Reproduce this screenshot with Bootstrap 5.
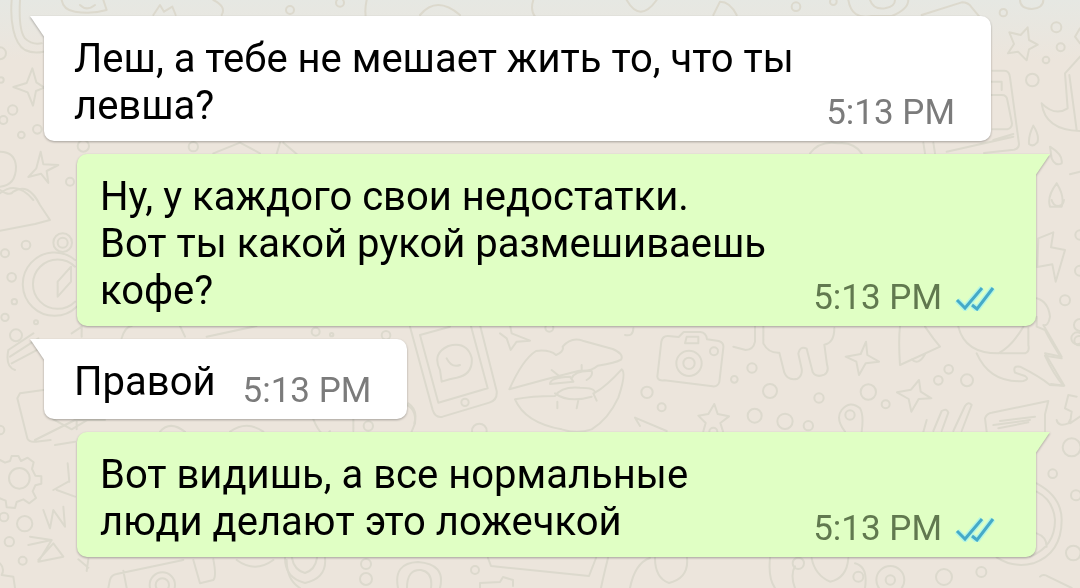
<!DOCTYPE html>
<html lang="ru">
<head>
<meta charset="utf-8">
<meta name="viewport" content="width=device-width, initial-scale=1">
<title>Чат</title>
<link href="https://cdn.jsdelivr.net/npm/bootstrap@5.3.0/dist/css/bootstrap.min.css" rel="stylesheet">
<style>
  body { background: #ece5dc; font-family: Roboto, "Noto Sans", sans-serif; color: #000; }
  .chat { min-height: 100vh; background: linear-gradient(#e6e8e3, #ece5dc 60px); isolation: isolate; }
  .wallpaper { position: absolute; inset: 0; width: 100%; height: 100%; z-index: -1; }
  .wallpaper path, .wallpaper circle { fill: none; stroke: #dcd9cd; stroke-width: 2px; stroke-linejoin: round; stroke-linecap: round; vector-effect: non-scaling-stroke; }
  .thread { padding: 16px 44px 30px; gap: 13px; }
  .bubble { position: relative; min-height: 80px; padding: 19px 36px 8px 30px; gap: 27px; border-radius: 10px; filter: drop-shadow(0 1px 1px rgba(0, 0, 0, .3)); }
  .bubble::before { content: ""; position: absolute; top: 0; width: 15px; height: 22px; background: inherit; }
  .incoming { background: #fff; border-top-left-radius: 0; margin-right: 45px; }
  .incoming::before { left: -14px; clip-path: polygon(0 0, 100% 0, 100% 100%); }
  .outgoing { background: #e0ffc4; border-top-right-radius: 0; margin-left: 33px; padding-left: 23px; padding-right: 41px; }
  .outgoing::before { right: -14px; clip-path: polygon(0 0, 100% 0, 0 100%); }
  .message-text { font-size: 40px; line-height: 47px; padding-bottom: 4px; }
  .stamp { font-size: 35px; line-height: 41px; color: #7b7b7b; white-space: nowrap; gap: 13px; }
  .outgoing .stamp { color: #61794f; }
  .checks { width: 40px; height: 26px; fill: none; stroke-width: 3; }
</style>
</head>
<body>
<main class="chat position-relative overflow-hidden">
  <svg class="wallpaper" viewBox="0 0 1080 588" preserveAspectRatio="xMidYMid slice" aria-hidden="true">
    <!-- top left -->
    <g transform="scale(.333333)">
      <path d="M35 0C30 60 40 130 75 150q25 12 55 5M60 0q-5 90 15 115 20 20 50 15M97 205l12 42 24 16-25 10-9 44-16-40-43-16 40-12zM185 0q5 30 40 35 50 8 95-5l-10-30M240 15q20 20 45 0M460 45l20-30 12 20 25-15 10 25M640 0q40 20 25 45M122 455l8 38 45 2-35 18 5 36-22-28-38 10 24-26zM0 455q45 0 48 45 0 55-48 60M0 580q50-40 100 20"/>
      <circle cx="38" cy="330" r="14"/><circle cx="64" cy="405" r="10"/><circle cx="112" cy="388" r="13"/><circle cx="3" cy="240" r="8"/><circle cx="0" cy="160" r="18"/><circle cx="10" cy="360" r="12"/><circle cx="250" cy="438" r="17"/><circle cx="210" cy="545" r="12"/><circle cx="870" cy="30" r="12"/><circle cx="1020" cy="8" r="12"/><circle cx="580" cy="440" r="14"/>
      <path d="M640 460l80-32 60 32M840 428l-10 34M850 428l40 34M1100 0q-20 90 60 130M1260 45q50-60 120 0M1600 0q-20 60 60 80M1880 0q40 70 90 0M2140 45l20-40q30 0 50 40"/>
    </g>
    <!-- top right -->
    <g transform="translate(780) scale(.333333)">
      <path d="M205 0q10 60 70 48h60q50-20 50-48M270 0q10 30 45 25 30-5 30-25M425 45l120-38q20 0 30 15l25 30M720 0q0 25 35 27 35-3 35-27M743 82l4 38 26 14-26 14-7 33-26-26-30 5 18-28-14-35 34 8zM638 212h35q15 0 17 20l27 200q0 14-15 17l-90 10M635 245h30v25M635 285h30q15 0 17 15l14 70q0 15-14 18h-44M640 420l60-18M500 455l200-45M760 377q-15 30-13 55 12 10 25-5 7-20-12-50zM785 310q40 40 78 15l-8-105 45-50M785 310q10 80 115 83M868 225l22 165M900 85l-15 25 15 20M810 440q40 25 35 50-20 10-30-15zM870 523l30-8M830 550q-30 40-20 70h35q10-30-15-70M90 460q30-40 85-30 45-5 70 30M430 428l5 32M460 428l5 32"/>
      <circle cx="48" cy="20" r="13"/><circle cx="160" cy="5" r="10"/><circle cx="670" cy="38" r="11"/><circle cx="829" cy="82" r="15"/><circle cx="842" cy="142" r="12"/><circle cx="798" cy="180" r="10"/><circle cx="757" cy="240" r="19"/>
    </g>
    <!-- left margin: torn cloud, compass, fork -->
    <g transform="translate(0 150) scale(.333333)">
      <path d="M0 120q30 20 40 5 45-30 80 40l30 45-45 12-105 20M225 330a95 95 0 1 0 5 140M225 350a74 74 0 1 0 0 105M213 350l-40 45 0 45 40-45zM25 600l75-50M30 620l85-55M35 640l95-50M25 600q-10 50 20 60M215 550q30-20 30-20v30M365 565q10-35 30-37M540 528l15 32M620 560l150-32"/>
      <circle cx="188" cy="278" r="28"/><circle cx="188" cy="278" r="15"/><circle cx="78" cy="285" r="13"/><circle cx="15" cy="310" r="12"/><circle cx="35" cy="382" r="13"/><circle cx="43" cy="455" r="8"/><circle cx="15" cy="502" r="11"/><circle cx="48" cy="556" r="18"/><circle cx="108" cy="517" r="6"/>
    </g>
    <!-- right margin: bolt, bell, unicorn -->
    <g transform="translate(780 200) scale(.333333)">
      <path d="M775 115l45-18-7 45 42 8-28 95-10-52-45 8zM815 0q5 18 20 18 15-2 17-18"/>
      <circle cx="855" cy="301" r="15"/><circle cx="900" cy="105" r="14"/><circle cx="900" cy="212" r="15"/><circle cx="900" cy="375" r="18"/><circle cx="897" cy="422" r="14"/>
      <path d="M770 295q35 10 40 55-5 30-20 25l55 95-50-10 58 97-40-5"/>
    </g>
    <!-- phone, lips, camera -->
    <g transform="translate(400 320) scale(.333333)">
      <path d="M30 20l68 250q8 25 30 20l140-42q25-8 22-35L240 15M60 45l55 203 148-43L212 15M60 45l90-25M125 185l-5-35q-25-50 25-72 55-15 70 35 5 50-45 60-20 3-45 12zM140 115q15 30 40 20M330 15l5 25 55 22-40 3-18 25-12-35-20-15M328 208q40-90 80-115 40-5 60 12 25-10 20-25 25-30 60-18l90 25q35 15 25 32-15 10-70 18-20 18-55 15-120 30-210 56zM450 192q0-20 60-22l10 15zM515 175q10-25 60-22 5 15-15 27M455 150l25 20M545 135v18M345 238q50-10 120-10 20-30 75-25 45 0 45 15 35-20 80-70 15 10-10 85-30 65-80 95-45 15-90 0-110-20-140-90zM465 220q40 30 110 10M472 245v20M535 240l-5 25M580 220l10 22M772 170l12-105q4-18 20-17l32 3 15-15h50q18 2 20 22l35 5q16 5 14 20l-12 103q-5 15-20 13l-145-18q-20 2-21-11zM860 50h35v20h-40zM705 293l15 25M705 293l95 40M943 252l10 30 34 7-26 20 8 25M943 252l-18 30-30 5 22 22-7 25M0 250q50 5 45 60l-10 25M675 45q25 5 25-20"/>
      <circle cx="867" cy="130" r="38"/><circle cx="867" cy="130" r="17"/><circle cx="942" cy="94" r="12"/><circle cx="195" cy="247" r="11"/><circle cx="741" cy="217" r="17"/><circle cx="785" cy="262" r="12"/><circle cx="1003" cy="178" r="10"/><circle cx="238" cy="333" r="22"/><circle cx="940" cy="335" r="12"/><circle cx="448" cy="23" r="12"/>
    </g>
    <g transform="translate(740 320) scale(.333333)">
      <path d="M45 20v45q-5 25-28 25l-37-10M70 20v50q15 30 48 28l15 60q10 25 40 18 15-10 12-30l-10-45q5-25 25-15l18 70q10 18 35 8 15-10 8-30l-8-60q30-5 30-50M378 65l4 40 35 20-40 5-20 35-8-40-32-15 45-8zM480 20q-5 40 0 115l120-55-20-25-25-35M515 118q20 20 40-15M655 20q20 80 120 80 40-20 75-80M710 100q40 90 140 83 20-5 5-15l-30-10q-8-22 15-18 60 30 90 55l40 2q-30-35-55-90l50 8q-30-45-50-85l-25-10v-30M780 100h75q15-5 10-25v-50M537 180l5 35 32 20-38 2-22 38-8-38-35-20 42-8zM315 335q-30-40-10-65 25-30 55-5 12 20 5 70M580 333l25-60q15-10 20 5l-20 55M640 333l35-75q10-15 20-3l-30 78M740 335l-5-40q5-15 20-17l170-35-10 40v50M780 303l105-13M775 325l90-18M985 225l25 5M985 225l-10 40 20 10-5 35 30-20"/>
      <circle cx="36" cy="144" r="14"/><circle cx="90" cy="213" r="21"/><circle cx="237" cy="234" r="14"/><circle cx="385" cy="216" r="23"/><circle cx="437" cy="253" r="12"/><circle cx="44" cy="287" r="21"/><circle cx="135" cy="304" r="23"/><circle cx="205" cy="317" r="14"/><circle cx="330" cy="285" r="14"/><circle cx="626" cy="148" r="13"/><circle cx="595" cy="181" r="13"/><circle cx="681" cy="181" r="18"/><circle cx="1012" cy="55" r="18"/>
    </g>
    <!-- around the short message -->
    <g transform="translate(0 320) scale(.333333)">
      <path d="M130 210l-70 10-8 15 30 120q5 12 25 10l45-5M105 360l120-60 90 0M160 298l55 30 50-30M165 375l60-10M230 298v30M480 335q30-35 75 0M690 335q50-35 100 0M940 298q30 70 50 35M1060 298v35M1225 250q30 20 18 60"/>
      <circle cx="0" cy="330" r="13"/><circle cx="1105" cy="318" r="14"/><circle cx="947" cy="35" r="12"/><circle cx="995" cy="44" r="5"/><circle cx="1158" cy="46" r="13"/>
    </g>
    <!-- bottom left: gear, stars, radio -->
    <g transform="translate(0 420) scale(.333333)">
      <path d="M35 108l20 0 8 15 20-10 18 14-5 20 10 20 18 2 0 22-18 5-8 18 10 20-20 16-18-12-20 8-5 18-25-2-3-20-20-8-20 8M0 120l15 8 15-5 5-15M203 130l5 55M160 210l45-25M170 210l55 20M130 270l20 55 10-55 35 50-5-60M85 375l70-15-40 65 75-15-30-40-45 50M90 350l65 10M235 418l30 25M265 418l-5 35M0 430q15 15 5 35l35 5 5 34M325 504l5-25q5-15 20-17l200-42M370 452l10 52M580 420l20 70 40-10q10-10 0-62M710 420q55 40 110 0M860 420q0 60 40 84"/>
      <circle cx="58" cy="175" r="31"/><circle cx="74" cy="311" r="23"/><circle cx="12" cy="291" r="13"/><circle cx="28" cy="365" r="14"/><circle cx="68" cy="422" r="12"/><circle cx="487" cy="495" r="38"/><circle cx="487" cy="495" r="20"/>
    </g>
    <!-- bottom strip -->
    <g transform="translate(0 555)">
      <path d="M285 3q0 20 20 25 22-5 20-25M292 3q2 12 13 15 10-3 12-15M398 33q-5-25 20-26 28 2 22 26M407 33q0-19 14-18 12 2 10 18M488 3l3 8 98 10 7-18M608 3q-5 20-7 30M630 33q5-25 20-30M655 3q0 20 14 25 20-5 18-25M770 3q-2 20 5 30M480 33v-5l20-1 3-5 10 3v6"/>
      <circle cx="366" cy="24" r="6"/><circle cx="366" cy="9" r="5"/><circle cx="475" cy="15" r="4"/>
    </g>
    <!-- bottom right: clock, beads -->
    <g transform="translate(780 420) scale(.333333)">
      <path d="M770 190q75 40 75 110 0 100-85 130-60 15-110-18M770 215q50 25 55 85 0 80-75 110M770 340q30 10 30 40M45 504q-15-40 0-65M95 415q10 50 55 70 50-10 55-70M225 430q40 10 30 74M780 470q10-10 25 0l70 34M440 0l-10 36M640 15l110-15M830 0q5 22 35 10l5-10"/>
      <circle cx="875" cy="82" r="27"/><circle cx="818" cy="161" r="13"/><circle cx="888" cy="226" r="15"/><circle cx="880" cy="399" r="22"/><circle cx="604" cy="456" r="15"/><circle cx="492" cy="471" r="24"/><circle cx="331" cy="480" r="42"/><circle cx="331" cy="480" r="14"/><circle cx="55" cy="430" r="17"/><circle cx="235" cy="470" r="15"/>
    </g>
  </svg>

  <div class="thread d-flex flex-column">
    <article class="bubble incoming d-flex justify-content-between align-items-end">
      <p class="message-text mb-0 align-self-start">Леш, а тебе не мешает жить то, что ты<br>левша?</p>
      <time class="stamp" datetime="17:13">5:13 PM</time>
    </article>

    <article class="bubble outgoing d-flex justify-content-between align-items-end">
      <p class="message-text mb-0 align-self-start">Ну, у каждого свои недостатки.<br>Вот ты какой рукой размешиваешь<br>кофе?</p>
      <div class="stamp d-flex align-items-center">
        <time datetime="17:13">5:13 PM</time>
        <svg class="checks" viewBox="0 0 40 26" role="img" aria-label="Прочитано"><path stroke="#b4f6e4" stroke-width="6" d="M2 15l8 8L27 3M17 20l5 4L38 3"/><path stroke="#45aac8" d="M2 15l8 8L27 3M17 20l5 4L38 3"/></svg>
      </div>
    </article>

    <article class="bubble incoming d-flex align-items-end align-self-start">
      <p class="message-text mb-0 align-self-start">Правой</p>
      <time class="stamp" datetime="17:13">5:13 PM</time>
    </article>

    <article class="bubble outgoing d-flex justify-content-between align-items-end">
      <p class="message-text mb-0 align-self-start">Вот видишь, а все нормальные<br>люди делают это ложечкой</p>
      <div class="stamp d-flex align-items-center">
        <time datetime="17:13">5:13 PM</time>
        <svg class="checks" viewBox="0 0 40 26" role="img" aria-label="Прочитано"><path stroke="#b4f6e4" stroke-width="6" d="M2 15l8 8L27 3M17 20l5 4L38 3"/><path stroke="#45aac8" d="M2 15l8 8L27 3M17 20l5 4L38 3"/></svg>
      </div>
    </article>
  </div>
</main>
<script src="https://cdn.jsdelivr.net/npm/bootstrap@5.3.0/dist/js/bootstrap.bundle.min.js"></script>
</body>
</html>
